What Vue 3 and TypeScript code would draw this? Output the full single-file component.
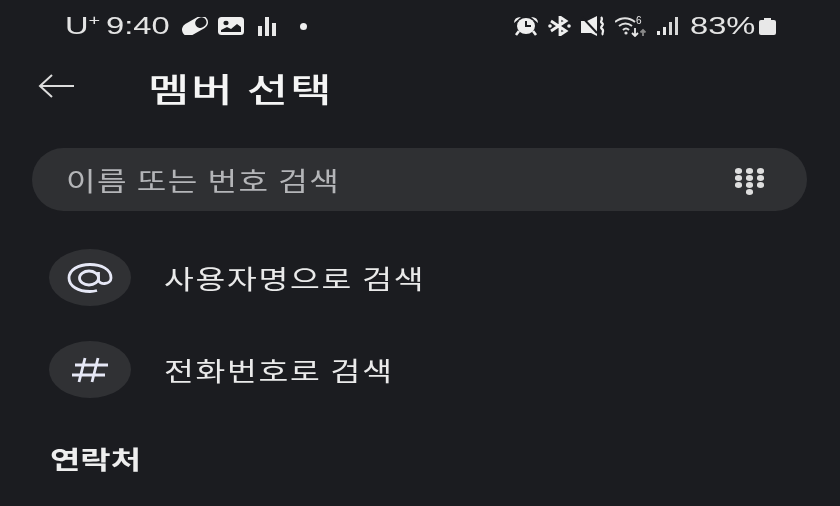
<script setup lang="ts">
interface Row { label: string; kind: 'at' | 'hash' }
const rows: Row[] = [
  { label: '사용자명으로 검색', kind: 'at' },
  { label: '전화번호로 검색', kind: 'hash' },
]
const dots = [0, 1, 2, 3, 4, 5, 6, 7, 8]
</script>

<template>
  <div class="screen">
    <div class="status">
      <div class="status-left">
        <span class="carrier"><span class="stretch">U<sup>+</sup></span></span>
        <span class="time"><span class="stretch">9:40</span></span>
        <svg class="pill" width="28" height="18" viewBox="0 0 28 18"><g transform="rotate(-30 14 9)"><rect x="0" y="2.500" width="28" height="13" rx="6.500" fill="#efefef"/><rect x="15" y="4" width="11.500" height="10" rx="5" fill="#1b1c20"/></g></svg>
        <svg class="image" width="26" height="18" viewBox="0 0 26 18"><rect x="0" y="0" width="26" height="18" rx="3.500" fill="#efefef"/><ellipse cx="8" cy="6" rx="2.600" ry="2.200" fill="#1b1c20"/><path d="M3 15v-2l6-3 4 2 6-5 4 3v5z" fill="#1b1c20"/></svg>
        <svg class="bars" width="18" height="20" viewBox="0 0 18 20"><rect x="0" y="10" width="4" height="10" fill="#e8e8e8"/><rect x="7" y="1" width="4" height="19" fill="#e8e8e8"/><rect x="14" y="7" width="4" height="13" fill="#e8e8e8"/></svg>
        <span class="dot"></span>
      </div>
      <div class="status-right">
        <svg width="24" height="20" viewBox="0 0 24 20"><path d="M0 7q0-6 7-6zM24 7q0-6-7-6z" fill="#efefef"/><ellipse cx="12" cy="10" rx="9" ry="8" fill="#efefef"/><path d="M12 5v5h5" stroke="#1b1c20" stroke-width="2" fill="none"/><path d="M5 15l-3 4M19 15l3 4" stroke="#efefef" stroke-width="2.600"/></svg>
        <svg width="23" height="20" viewBox="0 0 23 20"><path d="M3 5l15 10-6 4V1l6 4L3 15" fill="none" stroke="#efefef" stroke-width="2.800"/><circle cx="2" cy="10" r="1.800" fill="#efefef"/><circle cx="21" cy="10" r="1.800" fill="#efefef"/></svg>
        <svg width="24" height="20" viewBox="0 0 24 20"><path d="M0 5h6l10-5v20l-6-3H0z" fill="#efefef"/><path d="M1 1l15 16" stroke="#1b1c20" stroke-width="2"/><path d="M20 1c3 3-2 4 1 6s-3 4 0 6-1 4 1 6" fill="none" stroke="#efefef" stroke-width="2.200"/></svg>
        <svg width="32" height="22" viewBox="0 0 32 22"><path d="M0 7c6-5 14-5 20 0M4 11c4-3 9-3 13 0M8 15c2-2 4-2 6 0" fill="none" stroke="#e0e0e0" stroke-width="2"/><circle cx="11" cy="18" r="1.600" fill="#e0e0e0"/><path d="M20 13v8m-3-3l3 3 3-3" fill="none" stroke="#e8e8e8" stroke-width="1.800"/><path d="M28 21v-6m-2.500 2.500l2.500-2.500 2.500 2.500" fill="none" stroke="#8a8a8a" stroke-width="1.800"/><text x="21" y="9" class="six">6</text></svg>
        <svg width="22" height="18" viewBox="0 0 22 18"><rect x="0" y="14" width="3" height="4" fill="#e8e8e8"/><rect x="6" y="10" width="3" height="8" fill="#e8e8e8"/><rect x="12" y="5" width="3" height="13" fill="#d8d8d8"/><rect x="18" y="0" width="3" height="18" fill="#d8d8d8"/></svg>
        <span class="percent"><span class="stretch">83%</span></span>
        <svg width="17" height="17" viewBox="0 0 17 17"><rect x="0" y="2" width="17" height="15" rx="2" fill="#e8e8e8"/><rect x="5" y="0" width="7" height="3" fill="#e8e8e8"/></svg>
      </div>
    </div>

    <div class="header">
      <svg class="back" width="38" height="26" viewBox="0 0 38 26"><path d="M36 13H2M14 2L2 13l12 11" fill="none" stroke="#dcdcdc" stroke-width="2"/></svg>
      <h1 class="title">멤버 선택</h1>
    </div>

    <div class="search">
      <span class="placeholder">이름 또는 번호 검색</span>
      <div class="dialpad">
        <span v-for="d in dots" :key="d" class="key"></span>
        <span class="key key-last"></span>
      </div>
    </div>

    <div class="rows">
      <div v-for="row in rows" :key="row.label" class="row">
        <div class="badge">
          <svg v-if="row.kind === 'at'" width="46" height="30" viewBox="0 0 46 30"><g fill="none" stroke="#e6e8f6" stroke-width="2.800"><ellipse cx="22" cy="15" rx="9.500" ry="7"/><path d="M31.500 9v8c0 5 12.500 5 12.500-2C44 6 34 1.500 23 1.500 11 1.500 2 7 2 15s9 13.500 21 13.500c2.500 0 4.500-.3 7-1"/></g></svg>
          <svg v-else width="36" height="26" viewBox="0 0 36 26"><path d="M3 8h33M0 18h33M13 1L7 25M26 1l-6 24" fill="none" stroke="#e6e8f6" stroke-width="2.800"/></svg>
        </div>
        <span class="row-label">{{ row.label }}</span>
      </div>
    </div>

    <h2 class="section">연락처</h2>
  </div>
</template>

<style>
html, body { background: #1b1c20; }
</style>

<style scoped>
.screen {
  width: 840px;
  height: 506px;
  overflow: hidden;
  background: #1b1c20;
  color: #f2f2f2;
  font-family: "Noto Sans CJK KR", "Noto Sans", sans-serif;
  filter: blur(0.5px);
}
.status {
  height: 52px;
  display: flex;
  justify-content: space-between;
  align-items: center;
  padding: 0 64px 0 65px;
}
.status-left, .status-right {
  display: flex;
  align-items: center;
}
.carrier, .time, .percent {
  font-family: "Liberation Sans", sans-serif;
  font-size: 23px;
  color: #e4e4e4;
  white-space: nowrap;
}
.stretch {
  display: inline-block;
  transform: scaleX(1.42);
  transform-origin: left center;
}
.carrier { width: 32px; margin-right: 9px; }
.carrier sup { font-size: 14px; line-height: 0; }
.time { width: 64px; margin-right: 11px; }
.image { margin-left: 9px; }
.bars { margin-left: 14px; }
.dot { width: 7px; height: 7px; border-radius: 50%; background: #efefef; margin-left: 24px; }
.status-right { gap: 10px; }
.percent { width: 63px; margin: 0 -4px 0 1px; }
.six { font: 10px "Liberation Sans", sans-serif; fill: #e8e8e8; }
.header {
  height: 72px;
  display: flex;
  align-items: center;
  padding-left: 38px;
}
.back { margin-top: -4px; }
.title {
  margin: 0 0 0 72px;
  font-size: 33px;
  font-weight: 500;
  letter-spacing: 1.5px;
  color: #f5f5f5;
  transform: scaleX(1.36);
  transform-origin: left center;
}
.search {
  margin: 24px 33px 0 32px;
  height: 63px;
  border-radius: 32px;
  background: #2f3033;
  display: flex;
  align-items: center;
  justify-content: space-between;
  padding: 0 43px 0 34px;
}
.placeholder {
  font-size: 26px;
  color: #b4b5b8;
  letter-spacing: 1.2px;
  transform: scaleX(1.235);
  transform-origin: left center;
}
.dialpad {
  display: grid;
  grid-template-columns: repeat(3, 7px);
  gap: 1.5px 4px;
  margin-top: 4px;
}
.key { width: 7px; height: 5.5px; border-radius: 50%; background: #dedede; }
.key-last { grid-column: 2; }
.rows {
  margin-top: 38px;
  padding-left: 49px;
  display: flex;
  flex-direction: column;
  gap: 35px;
}
.row { display: flex; align-items: center; gap: 33px; }
.badge {
  width: 82px;
  height: 57px;
  border-radius: 50%;
  background: #303134;
  display: flex;
  align-items: center;
  justify-content: center;
}
.row-label {
  font-size: 26px;
  letter-spacing: 1.4px;
  color: #eaeaea;
  transform: scaleX(1.245);
  transform-origin: left center;
}
.section {
  margin: 40px 0 0 50px;
  font-size: 25px;
  font-weight: 700;
  color: #eeeeee;
  line-height: 40px;
  transform: scaleX(1.32);
  transform-origin: left center;
}
</style>
